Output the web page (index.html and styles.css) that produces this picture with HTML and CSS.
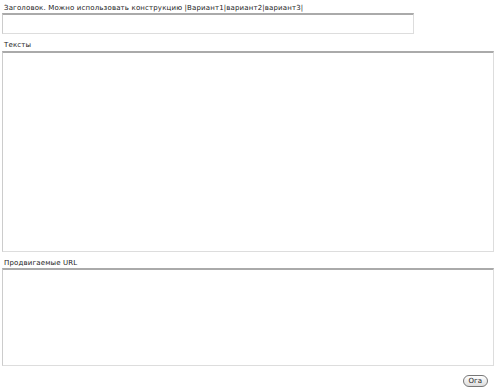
FILE: index.html
```html
<!DOCTYPE html>
<html lang="ru">
<head>
    <meta charset="UTF-8">
    <title>Генератор</title>
    <link rel="stylesheet" href="styles.css">
</head>
<body>
    <form class="gen-form">
        <label class="field-label" for="title">Заголовок. Можно использовать конструкцию |Вариант1|вариант2|вариант3|</label>
        <input type="text" id="title" class="title-input">

        <label class="field-label gap" for="texts">Тексты</label>
        <textarea id="texts" class="texts-area"></textarea>

        <label class="field-label gap" for="urls">Продвигаемые URL</label>
        <textarea id="urls" class="urls-area"></textarea>

        <div class="actions">
            <button type="submit" class="submit-btn">Ога</button>
        </div>
    </form>
</body>
</html>
```

FILE: styles.css
```css
body {
    margin: 0;
    padding: 4px 6px 0 2px;
    font-family: "DejaVu Sans", sans-serif;
    font-size: 7px;
    color: #222;
    background: #fff;
}
.gen-form {
    display: flex;
    flex-direction: column;
}
.field-label {
    display: block;
    padding-left: 2px;
    line-height: 8px;
    letter-spacing: 0.15px;
}
.field-label.gap {
    margin-top: 7px;
}
input,
textarea {
    box-sizing: border-box;
    margin: 0;
    border: 1px solid #ddd;
    border-top: 2px solid #aaa;
    border-left-color: #ccc;
    background: #fff;
    resize: none;
}
.title-input {
    width: 412px;
    height: 21px;
    margin-top: 1px;
}
.texts-area {
    width: 492px;
    height: 201px;
    margin-top: 2px;
}
.urls-area {
    width: 492px;
    height: 98px;
    margin-top: 1px;
}
.actions {
    display: flex;
    justify-content: flex-end;
    padding: 9px 6px 0 0;
}
.submit-btn {
    font-family: "DejaVu Sans", sans-serif;
    font-size: 7px;
    line-height: 8px;
    color: #222;
    padding: 1px 5px;
    border: 1px solid #777;
    border-radius: 6px;
    background: linear-gradient(#fff, #ddd);
}
```
